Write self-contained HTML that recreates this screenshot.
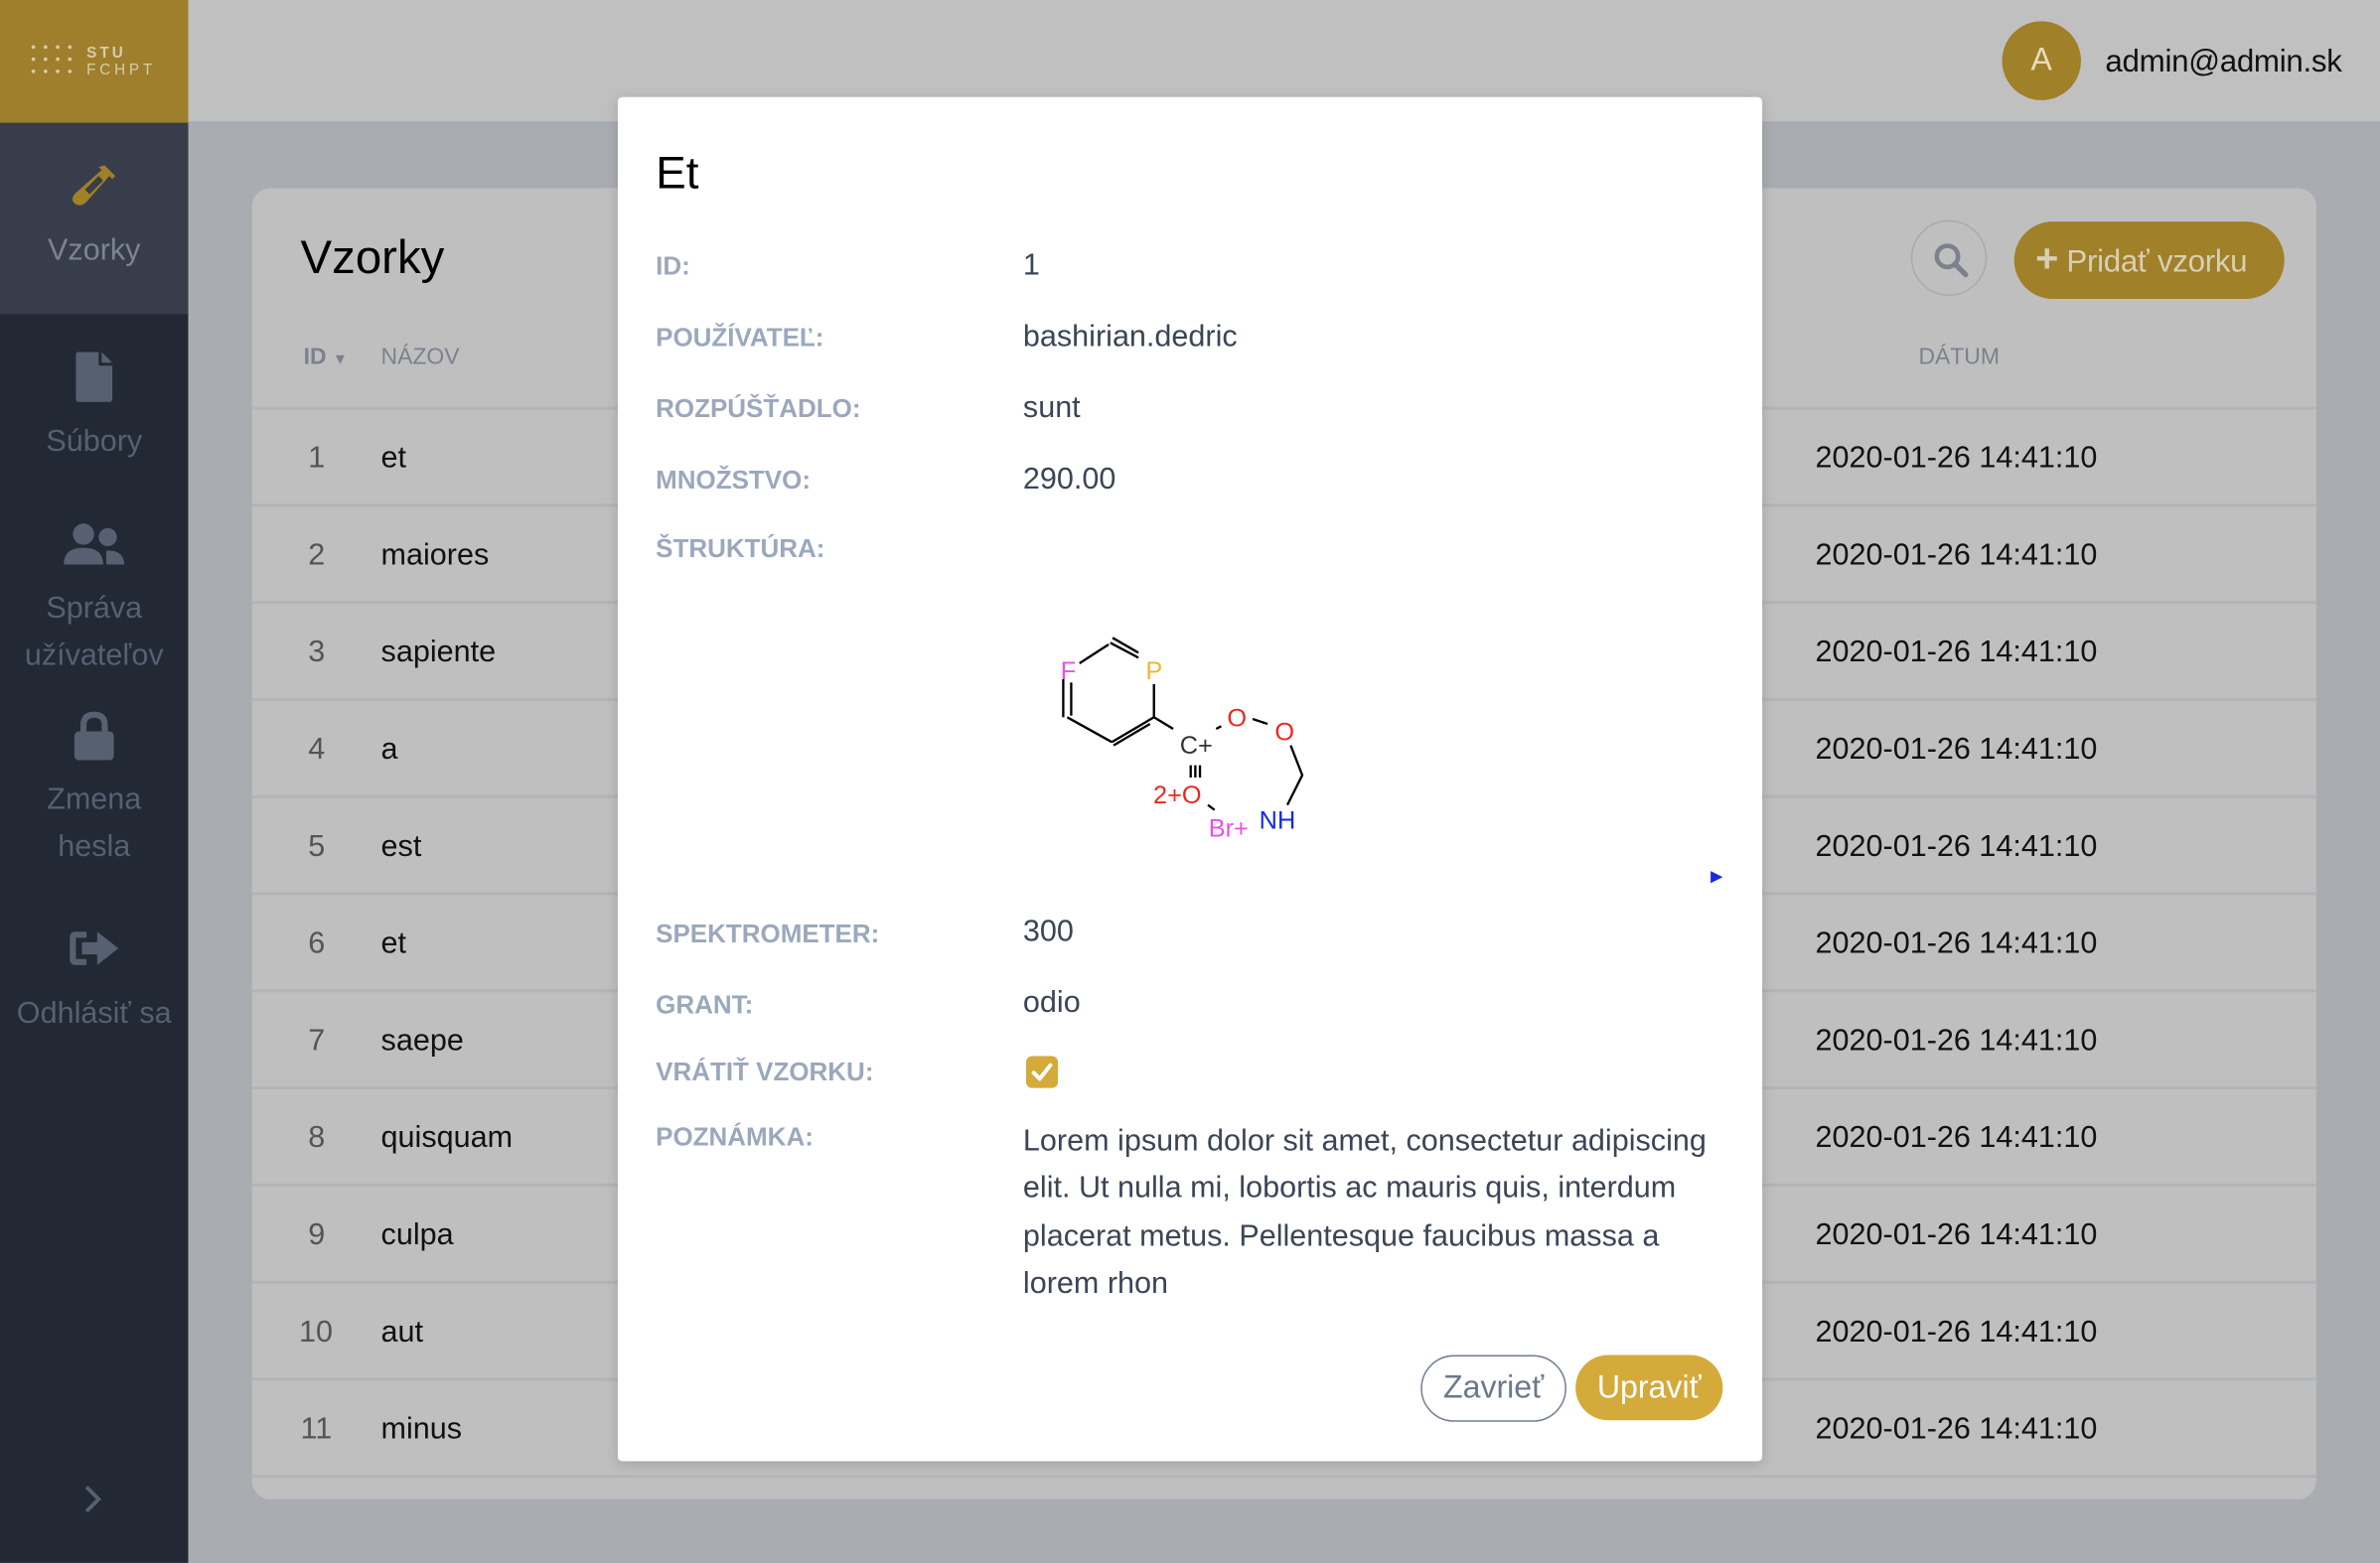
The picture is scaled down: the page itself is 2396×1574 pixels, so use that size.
<!DOCTYPE html>
<html><head><meta charset="utf-8"><style>
html,body{margin:0;padding:0;width:2396px;height:1574px;overflow:hidden;background:#a9acb1;}
#w{position:absolute;left:0;top:0;width:1568px;height:1030px;transform:scale(1.52806);transform-origin:0 0;font-family:"Liberation Sans",sans-serif;}
.a{position:absolute;}
.sb{left:0;top:0;width:124px;height:1030px;background:#222834;}
.nl{position:absolute;left:0;width:124px;text-align:center;color:#566071;font-size:20px;line-height:31px;}
.row{position:absolute;left:166px;width:1360px;height:64px;border-top:2px solid #b3b4b6;font-size:20px;color:#111;}
.row span{position:absolute;top:21px;}
.lb{position:absolute;left:432px;font-size:17px;font-weight:bold;color:#9ba8bc;}
.vl{position:absolute;left:674px;font-size:20px;color:#3b4556;}
</style></head><body><div id="w">
<div class="a" style="left:124px;top:0;width:1444px;height:80px;background:#c0c0c0;border-bottom:2px solid #a7acb4"></div>
<div class="a" style="left:1319px;top:14px;width:52px;height:52px;border-radius:50%;background:#a08028;color:#e8dcbc;font-size:21px;text-align:center;line-height:52px">A</div>
<div class="a" style="left:1387px;top:29px;font-size:20.5px;color:#111;letter-spacing:-0.2px">admin@admin.sk</div>
<div class="a sb"></div>
<div class="a" style="left:0;top:0;width:124px;height:81px;background:#9f7f2c"></div>
<svg class="a" style="left:20px;top:28px" width="90" height="24"><g fill="#d8ccaa"><circle cx="2" cy="3" r="1.2"/><circle cx="10" cy="3" r="1.2"/><circle cx="18" cy="3" r="1.2"/><circle cx="26" cy="3" r="1.2"/><circle cx="2" cy="11" r="1.2"/><circle cx="10" cy="11" r="1.2"/><circle cx="18" cy="11" r="1.2"/><circle cx="26" cy="11" r="1.2"/><circle cx="2" cy="19" r="1.2"/><circle cx="10" cy="19" r="1.2"/><circle cx="18" cy="19" r="1.2"/><circle cx="26" cy="19" r="1.2"/></g><text x="37" y="10" font-size="10" font-weight="bold" fill="#d8ccaa" letter-spacing="2" font-family="Liberation Sans">STU</text><text x="37" y="21" font-size="10" fill="#d8ccaa" letter-spacing="2.5" font-family="Liberation Sans">FCHPT</text></svg>
<div class="a" style="left:0;top:81px;width:124px;height:126px;background:#373d4a"></div>
<svg class="a" style="left:45px;top:107px" width="32" height="32" viewBox="0 0 32 32"><path d="M24 2 L31 9 L29 11 L27 9 L12 26 Q8 30 4 27 Q1 24 5 20 L22 5 L20 3Z" fill="#a08028"/><path d="M11 18 L20 9 L23 12 L14 21Z" fill="#373d4a"/></svg>
<div class="nl" style="top:150px;color:#7c8391">Vzorky</div>
<svg class="a" style="left:49px;top:232px" width="26" height="33" viewBox="0 0 26 33"><path d="M2 0 H16 V9 H25 V31 Q25 33 23 33 H3 Q1 33 1 31 V2 Q1 0 2 0Z M18 0 L25 7 H18Z" fill="#566071"/></svg>
<div class="nl" style="top:276px">Súbory</div>
<svg class="a" style="left:41px;top:344px" width="42" height="30" viewBox="0 0 42 30"><circle cx="14" cy="8" r="7" fill="#566071"/><circle cx="30" cy="10" r="6" fill="#566071"/><path d="M1 28 Q1 17 14 17 Q27 17 27 28Z" fill="#566071"/><path d="M29 28 L29 19 Q40 18 41 28Z" fill="#566071"/></svg>
<div class="nl" style="top:386px">Správa<br>užívateľov</div>
<svg class="a" style="left:47px;top:468px" width="30" height="34" viewBox="0 0 30 34"><path d="M6 14 V10 Q6 1 15 1 Q24 1 24 10 V14 H20 V10 Q20 5 15 5 Q10 5 10 10 V14Z" fill="#566071"/><rect x="2" y="14" width="26" height="19" rx="3" fill="#566071"/></svg>
<div class="nl" style="top:512px">Zmena<br>hesla</div>
<svg class="a" style="left:45px;top:611px" width="34" height="28" viewBox="0 0 34 28"><path d="M12 3 H5 Q1 3 1 7 V21 Q1 25 5 25 H12 V21 H5 V7 H12Z" fill="#566071"/><path d="M9 10 H19 V3 L33 14 L19 25 V18 H9Z" fill="#566071"/></svg>
<div class="nl" style="top:653px">Odhlásiť sa</div>
<svg class="a" style="left:54px;top:978px" width="14" height="20"><path d="M3 2 L11 10 L3 18" stroke="#566071" stroke-width="2.5" fill="none"/></svg>

<div class="a" style="left:166px;top:124px;width:1360px;height:864px;background:#bfbfbf;border-radius:12px;"></div>
<div class="a" style="left:198px;top:152px;font-size:31px;color:#000">Vzorky</div>
<div class="a" style="left:200px;top:227px;font-size:15px;color:#7b828d;font-weight:bold">ID <span style="font-size:10px">▼</span></div>
<div class="a" style="left:251px;top:227px;font-size:15px;color:#7b828d">NÁZOV</div>
<div class="a" style="left:1264px;top:227px;font-size:15px;color:#7b828d">DÁTUM</div>
<div class="a" style="left:1259px;top:145px;width:50px;height:50px;border:1px solid #a8abaf;border-radius:50%;box-sizing:border-box"></div>
<svg class="a" style="left:1273px;top:159px" width="24" height="24"><circle cx="10" cy="10" r="7" stroke="#7c828c" stroke-width="3" fill="none"/><path d="M15 15 L22 22" stroke="#7c828c" stroke-width="3.5" stroke-linecap="round"/></svg>
<div class="a" style="left:1327px;top:146px;width:178px;height:51px;border-radius:26px;background:#a08028"></div>
<div class="a" style="left:1341px;top:160px;font-size:20.5px;color:#d9cfb3;letter-spacing:-0.2px"><b style="font-size:26px;line-height:20px">+</b> Pridať vzorku</div>

<div class="row" style="top:268px"><span style="left:37px">1</span><span style="left:85px">et</span><span style="left:1030px">2020-01-26 14:41:10</span></div>
<div class="row" style="top:332px"><span style="left:37px">2</span><span style="left:85px">maiores</span><span style="left:1030px">2020-01-26 14:41:10</span></div>
<div class="row" style="top:396px"><span style="left:37px">3</span><span style="left:85px">sapiente</span><span style="left:1030px">2020-01-26 14:41:10</span></div>
<div class="row" style="top:460px"><span style="left:37px">4</span><span style="left:85px">a</span><span style="left:1030px">2020-01-26 14:41:10</span></div>
<div class="row" style="top:524px"><span style="left:37px">5</span><span style="left:85px">est</span><span style="left:1030px">2020-01-26 14:41:10</span></div>
<div class="row" style="top:588px"><span style="left:37px">6</span><span style="left:85px">et</span><span style="left:1030px">2020-01-26 14:41:10</span></div>
<div class="row" style="top:652px"><span style="left:37px">7</span><span style="left:85px">saepe</span><span style="left:1030px">2020-01-26 14:41:10</span></div>
<div class="row" style="top:716px"><span style="left:37px">8</span><span style="left:85px">quisquam</span><span style="left:1030px">2020-01-26 14:41:10</span></div>
<div class="row" style="top:780px"><span style="left:37px">9</span><span style="left:85px">culpa</span><span style="left:1030px">2020-01-26 14:41:10</span></div>
<div class="row" style="top:844px"><span style="left:31px">10</span><span style="left:85px">aut</span><span style="left:1030px">2020-01-26 14:41:10</span></div>
<div class="row" style="top:908px;height:62px;border-bottom:2px solid #b3b4b6"><span style="left:32px">11</span><span style="left:85px">minus</span><span style="left:1030px">2020-01-26 14:41:10</span></div>
<style>.row span:first-child{color:#555}</style>

<div class="a" style="left:407px;top:64px;width:754px;height:899px;background:#fff;border-radius:3px;box-shadow:0 2px 8px rgba(0,0,0,.15)"></div>
<div class="a" style="left:432px;top:98px;font-size:30px;color:#000">Et</div>
<div class="lb" style="top:166px">ID:</div><div class="vl" style="top:164px">1</div>
<div class="lb" style="top:213px">POUŽÍVATEĽ:</div><div class="vl" style="top:211px">bashirian.dedric</div>
<div class="lb" style="top:260px">ROZPÚŠŤADLO:</div><div class="vl" style="top:258px">sunt</div>
<div class="lb" style="top:307px">MNOŽSTVO:</div><div class="vl" style="top:305px">290.00</div>
<div class="lb" style="top:352px">ŠTRUKTÚRA:</div>
<div class="lb" style="top:606px">SPEKTROMETER:</div><div class="vl" style="top:603px">300</div>
<div class="lb" style="top:653px">GRANT:</div><div class="vl" style="top:650px">odio</div>
<div class="lb" style="top:697px">VRÁTIŤ VZORKU:</div>
<div class="a" style="left:676px;top:696px;width:21px;height:21px;border-radius:4px;background:#d4aa3a"></div>
<svg class="a" style="left:676px;top:696px" width="21" height="21"><path d="M5 11 L9 15 L16 6" stroke="#fff" stroke-width="2.6" fill="none" stroke-linecap="round" stroke-linejoin="round"/></svg>
<div class="lb" style="top:740px">POZNÁMKA:</div>
<div class="vl" style="top:737px;width:470px;line-height:31.3px">Lorem ipsum dolor sit amet, consectetur adipiscing elit. Ut nulla mi, lobortis ac mauris quis, interdum placerat metus. Pellentesque faucibus massa a lorem rhon</div>
<svg class="a" style="left:1126px;top:573px" width="10" height="10"><path d="M1 1 L9 5 L1 9Z" fill="#1a2ae0"/></svg>

<svg class="a" style="left:654.4px;top:379.6px" width="261.8" height="196.3" viewBox="0 0 1200 900" font-family="Liberation Sans" font-size="76">
<g stroke="#000" stroke-width="7" fill="none">
<path d="M262 262 L350 205"/><path d="M355 200 L440 245"/><path d="M362 185 L440 230"/>
<path d="M487 325 L487 425"/><path d="M487 425 L360 500"/><path d="M475 445 L365 510"/>
<path d="M360 500 L225 425"/><path d="M213 310 L213 425"/><path d="M237 320 L237 420"/>
<path d="M487 425 L545 460"/><path d="M675 460 L690 452"/><path d="M785 430 L830 445"/>
<path d="M900 510 L935 600 L890 690"/><path d="M650 690 L670 705"/>
<path d="M598 570 L598 607 M612 570 L612 607 M626 570 L626 607"/>
</g>
<text x="205" y="310" fill="#e94ee9">F</text>
<text x="462" y="310" fill="#f2b632">P</text>
<text x="565" y="535" fill="#333">C+</text>
<text x="708" y="452" fill="#e8291f">O</text>
<text x="852" y="494" fill="#e8291f">O</text>
<text x="485" y="685" fill="#e8291f">2+O</text>
<text x="652" y="785" fill="#e94ee9">Br+</text>
<text x="805" y="762" fill="#1228ea">NH</text>
</svg>

<div class="a" style="left:936px;top:893px;width:96px;height:44px;border:1.5px solid #758096;border-radius:23px;box-sizing:border-box;color:#6d788c;font-size:21px;text-align:center;line-height:41px">Zavrieť</div>
<div class="a" style="left:1038px;top:893px;width:97px;height:43px;border-radius:22px;background:#d4aa3a;color:#fff;font-size:21px;text-align:center;line-height:43px">Upraviť</div>
</div></body></html>
